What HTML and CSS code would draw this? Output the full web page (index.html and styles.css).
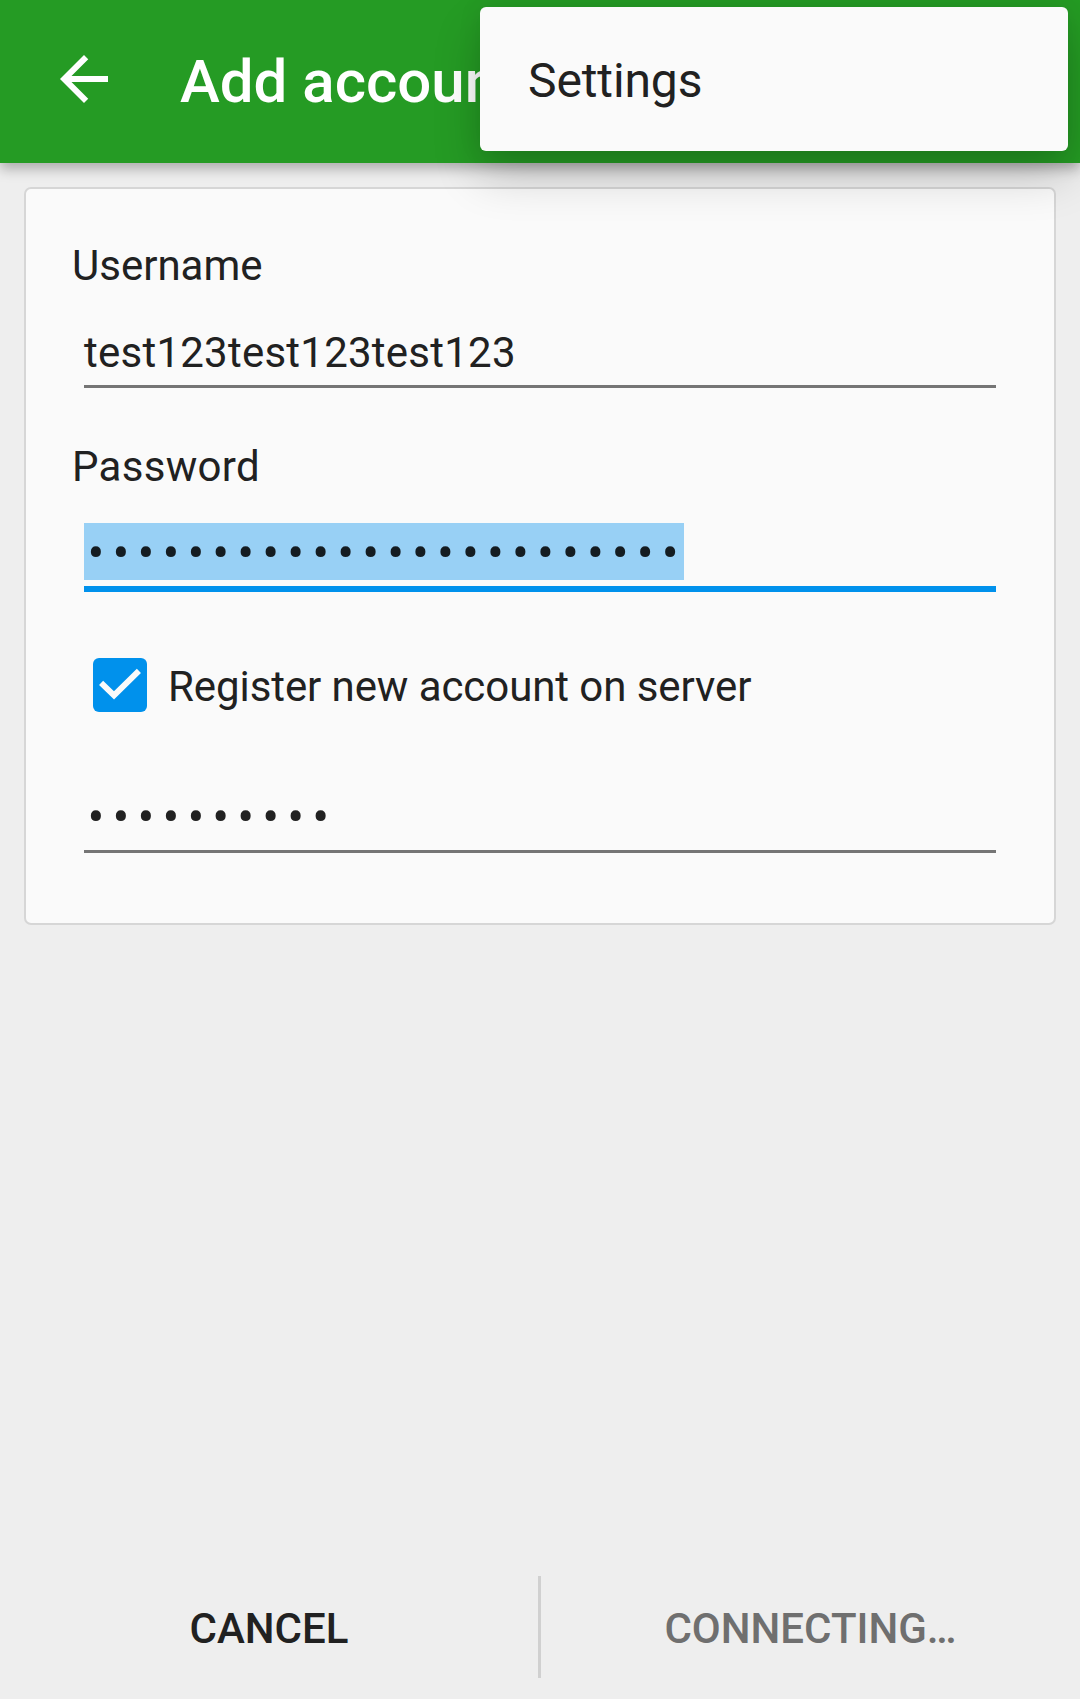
FILE: index.html
```html
<!DOCTYPE html>
<html lang="en">
<head>
<meta charset="utf-8">
<title>Add account</title>
<link rel="stylesheet" href="styles.css">
</head>
<body>
<div class="screen">
  <header class="toolbar">
    <svg class="back" viewBox="0 0 24 24" aria-hidden="true"><path d="M20 11H7.83l5.59-5.59L12 4l-8 8 8 8 1.41-1.41L7.83 13H20v-2z"/></svg>
    <h1 class="title">Add account</h1>
  </header>
  <div class="menu"><span class="menu-item">Settings</span></div>

  <main class="card">
    <div class="label">Username</div>
    <div class="field field-text">test123test123test123</div>
    <div class="label label-password">Password</div>
    <div class="field field-secret field-focused"><span class="dots selected">••••••••••••••••••••••••</span></div>
    <div class="check-row">
      <svg class="checkbox" viewBox="0 0 54 54" aria-hidden="true">
        <rect width="54" height="54" rx="6" fill="#0091ec"/>
        <path d="M8.1 24.9L21 37.3L45.9 12.8" fill="none" stroke="#fafafa" stroke-width="5.9"/>
      </svg>
      <span class="check-label">Register new account on server</span>
    </div>
    <div class="field field-secret field-confirm"><span class="dots">••••••••••</span></div>
  </main>

  <footer class="actions">
    <span class="action action-cancel">CANCEL</span>
    <span class="divider"></span>
    <span class="action action-disabled">CONNECTING…</span>
  </footer>
</div>
</body>
</html>
```
FILE: styles.css
```css
* { box-sizing: border-box; }
body {
  margin: 0;
  background: #eee;
  color: #212121;
  font: 400 42px/50px Roboto, sans-serif;
}
.screen {
  position: relative;
  display: flex;
  flex-direction: column;
  height: 1699px;
  overflow: hidden;
}
.toolbar {
  display: flex;
  flex: none;
  height: 163px;
  padding: 43px 0 0 48px;
  background: #259b24;
  box-shadow: 0 6px 12px rgba(0, 0, 0, .28);
}
.back { width: 72px; height: 72px; fill: #fff; }
.title {
  margin: 4px 0 0 60px;
  color: #fff;
  font-size: 60px;
  font-weight: 500;
  line-height: 70px;
  white-space: nowrap;
}
.menu {
  position: absolute;
  top: 7px;
  left: 480px;
  width: 588px;
  height: 144px;
  padding: 46px 48px;
  border-radius: 6px;
  background: #fafafa;
  box-shadow: 0 24px 48px rgba(0, 0, 0, .2), 0 0 24px rgba(0, 0, 0, .08);
  font-size: 48px;
  letter-spacing: -.12px;
  line-height: 56px;
}
.menu-item { display: block; }
.card {
  flex: none;
  height: 738px;
  margin: 24px 24px 0;
  padding: 52px 58px 0;
  border: 2px solid #d6d6d6;
  border-radius: 7px;
  background: #fafafa;
}
.label { margin-left: -12px; }
.label-password { margin-top: 54px; letter-spacing: .3px; }
.field {
  margin-top: 37px;
  padding-bottom: 7px;
  border-bottom: 3px solid #757575;
}
.field-text { letter-spacing: .24px; }
.field-secret {
  display: flex;
  height: 66px;
  margin-top: 31px;
  padding-bottom: 6px;
}
.field-focused { height: 69px; border-bottom: 6px solid #0091ec; }
.field-confirm { margin-top: 75px; }
.dots {
  height: 57px;
  padding-left: 3.5px;
  font-size: 50px;
  letter-spacing: 8.1px;
  line-height: 61px;
  white-space: nowrap;
}
.selected { width: 600px; background: #98d0f5; color: #141c21; }
.check-row {
  display: flex;
  align-items: flex-start;
  margin: 66px 0 0 9px;
}
.checkbox { width: 54px; height: 54px; }
.check-label {
  height: 54px;
  margin-left: 21px;
  letter-spacing: -.08px;
  line-height: 57px;
}
.actions {
  display: flex;
  align-items: stretch;
  height: 102px;
  margin-top: auto;
  margin-bottom: 21px;
}
.action {
  flex: 1;
  text-align: center;
  font-weight: 500;
  line-height: 105px;
}
.action-cancel { flex: 0 0 538px; }
.action-disabled { color: #6f6f6f; }
.divider { width: 3px; background: #d0d0d0; }
```
